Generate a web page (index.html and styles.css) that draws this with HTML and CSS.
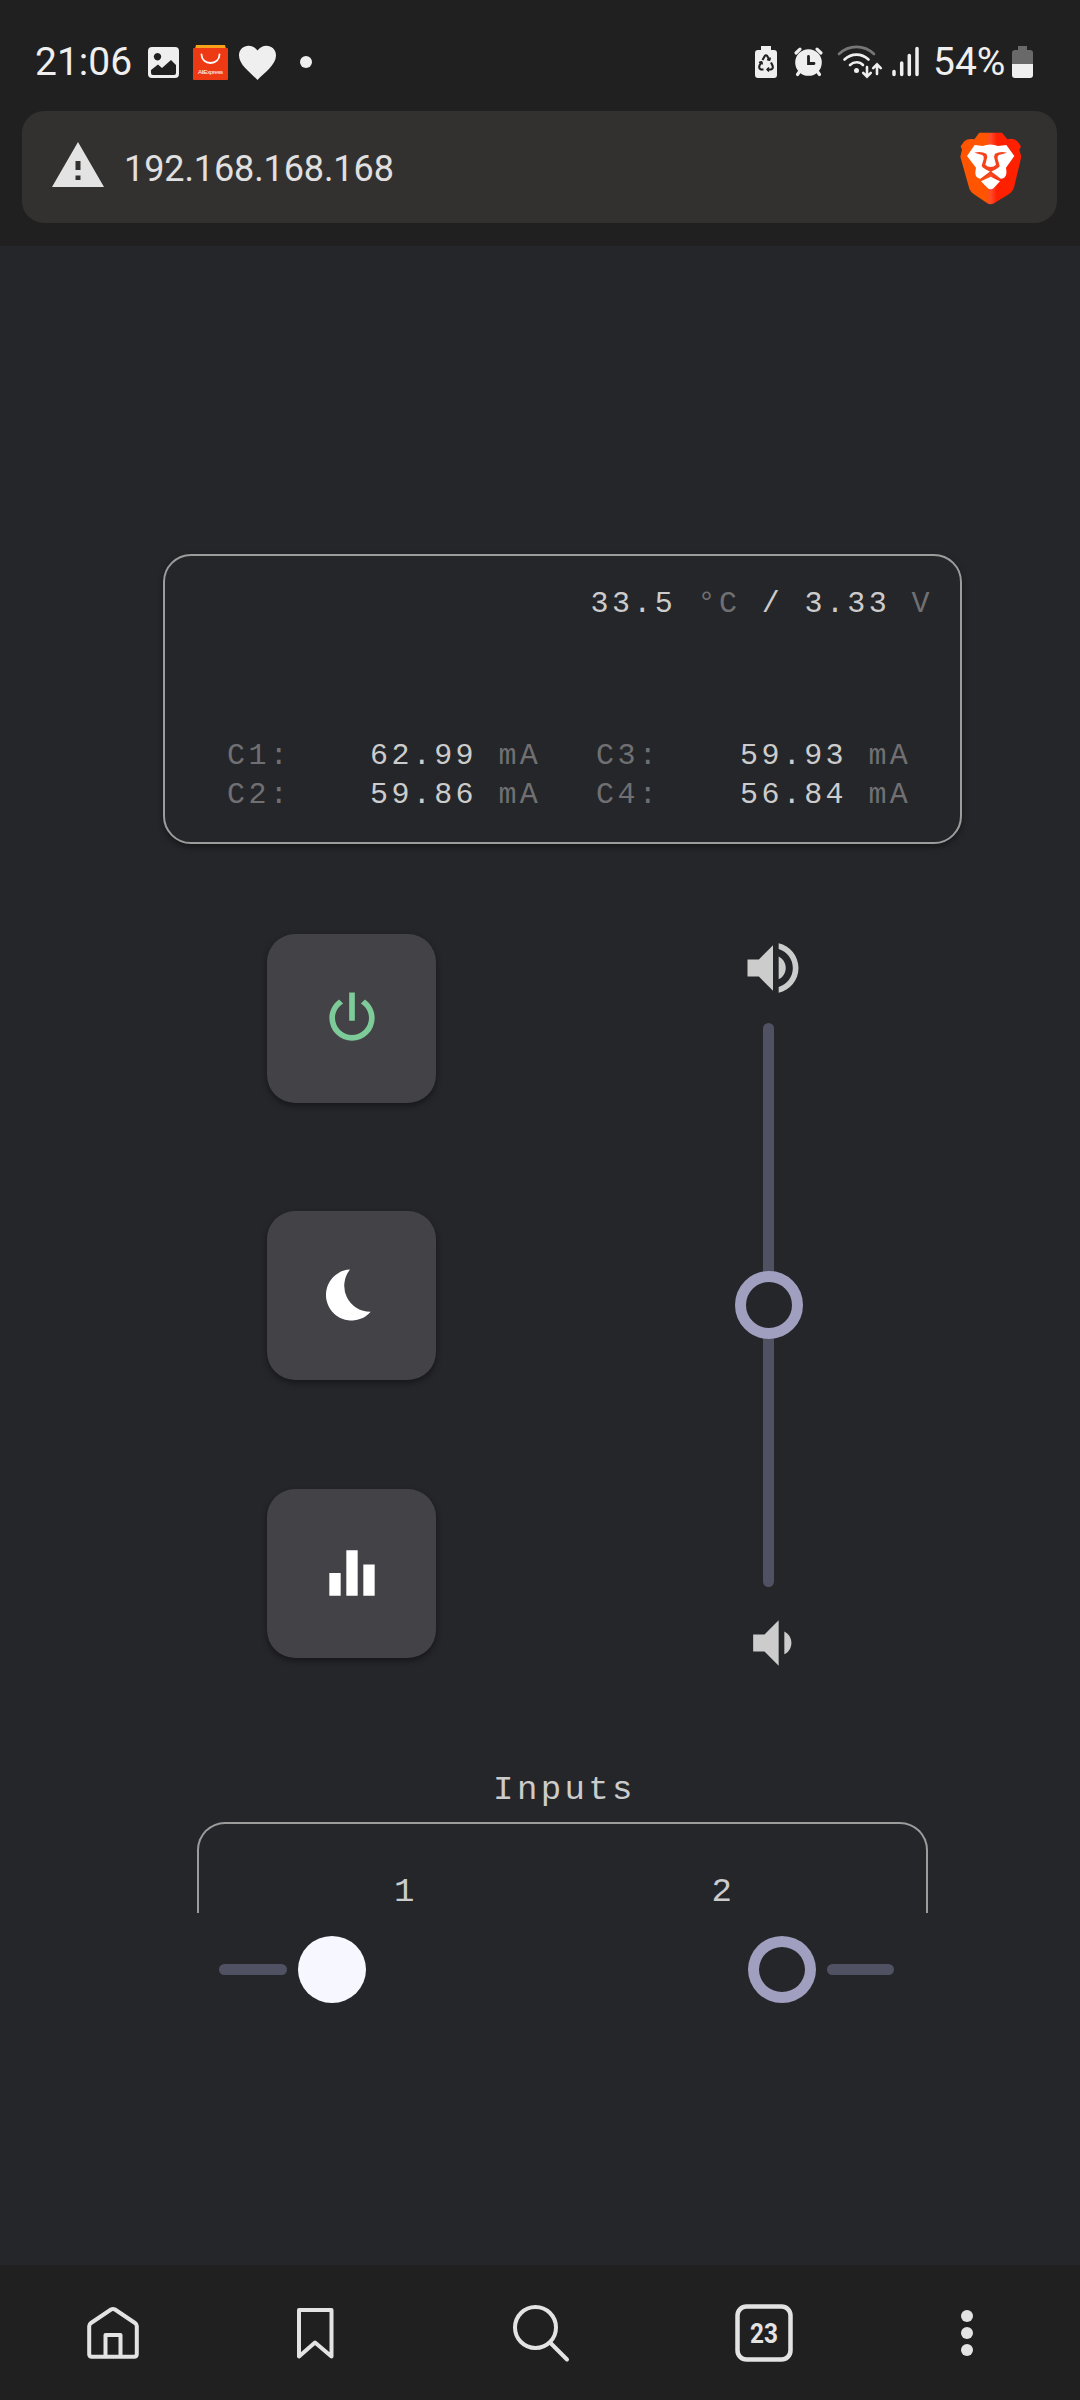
FILE: index.html
```html
<!DOCTYPE html>
<html lang="en">
<head>
<meta charset="utf-8">
<title>192.168.168.168</title>
<link rel="stylesheet" href="styles.css">
</head>
<body>
<header class="chrome">
  <div class="status">
    <span class="clock">21:06</span>
    <svg width="38" height="44" viewBox="148 40 38 44"><path fill="#efefef" fill-rule="evenodd" d="M152 47h23q4 0 4 4v23q0 4-4 4h-23q-4 0-4-4V51q0-4 4-4zM157.500 53a3.700 3.700 0 1 0 .01 0zM151 70v3q0 2 2 2h21q2 0 2-2v-8l-5-5-9 8-4-3.500z"/></svg>
    <svg width="48" height="44" viewBox="186 40 48 44"><path fill="#f6a21a" d="M196 45h29l1 4h-31z"/><path fill="#ee3a14" d="M194 48h33q1 0 1 1v30q0 1-1 1h-33q-1 0-1-1V49q0-1 1-1z"/><path fill="none" stroke="#fff" stroke-width="1.800" stroke-linecap="round" d="M201.500 54.500c0 5 4 8.500 9 8.500s9-3.500 9-8.500"/><text x="198" y="74" font-family="Liberation Sans" font-size="6" fill="#fff" textLength="25">AliExpress</text></svg>
    <svg width="54" height="44" viewBox="234 40 54 44"><path fill="#efefef" d="M257.500 80C251 73 239 65 239 55.500c0-10.500 13-13 18.500-5C263 42.500 276 45 276 55.500 276 65 264 73 257.500 80z"/></svg>
    <svg width="36" height="44" viewBox="288 40 36 44"><circle cx="306" cy="62" r="6" fill="#efefef"/></svg>
    <svg class="push" width="38" height="44" viewBox="748 40 38 44"><path fill="#efefef" d="M761 46h10v4h3q3 0 3 3v22q0 3-3 3h-16q-3 0-3-3V53q0-3 3-3h3z"/><g fill="none" stroke="#202020" stroke-width="2.100" stroke-linejoin="round"><path d="M762.500 60l2.300-4q1.200-1.500 2.400 0l2.300 4M771 62.500l1.500 3q1 3.500-1.500 4h-4M763.500 69.500h-2.500q-2.500-1-1.500-4l2-3.500"/><path d="M769 67.500l-2 2 2 2M759 62.500l2.700-.7.700 2.700M767 59.500l2.600.700.700-2.700" stroke-width="1.500"/></g></svg>
    <svg width="44" height="44" viewBox="786 40 44 44"><circle cx="808.500" cy="62.500" r="13.300" fill="#efefef"/><g stroke="#efefef" stroke-width="3.200" stroke-linecap="round"><path d="M796 53l4-3.800M821 53l-4-3.800M800 71l-2.500 3.500M817 71l2.500 3.500"/></g><path fill="none" stroke="#202020" stroke-width="2.800" stroke-linecap="round" d="M808.500 56.500v7h5.500"/></svg>
    <svg width="57" height="44" viewBox="830 40 57 44"><g fill="none" stroke="#efefef" stroke-width="2.600" stroke-linecap="round"><path stroke="#777" d="M839 54c10-9.500 25-9.500 35 0"/><path d="M844.500 59.500c7-6.500 17-6.500 24 0M850 65c4-3.700 9.500-3.700 13 0M867 67v9.500m-3.800-3.700 3.800 3.800 3.800-3.800M877 74v-9.500m-3.800 3.700 3.800-3.800 3.800 3.800"/></g><circle cx="856.500" cy="70.500" r="2.500" fill="#efefef"/></svg>
    <svg width="40" height="44" viewBox="887 40 40 44"><g stroke="#efefef" stroke-width="3.500" stroke-linecap="round"><path d="M894 71.500v3M901.700 63v11.500M909.300 55.500v19M917 48.500v26"/></g></svg>
    <span class="charge">54%</span>
    <svg width="33" height="44" viewBox="1007 40 33 44"><path fill="#696969" d="M1018 46h9v4h3q3 0 3 3v12h-21V53q0-3 3-3h3z"/><path fill="#efefef" d="M1012 64h21v11q0 3-3 3h-15q-3 0-3-3z"/></svg>
  </div>
  <div class="address">
    <svg width="52" height="45" viewBox="0 0 52 45"><path fill="#e3e3e3" fill-rule="evenodd" d="M26 0L52 45H0zM23.500 19v9h5v-9zM23.500 33.500v4.500h5v-4.500z"/></svg>
    <span class="url">192.168.168.168</span>
    <svg class="shield" width="62" height="73" viewBox="692 335 186 219">
      <defs><linearGradient id="mane"><stop offset=".42" stop-color="#ff5500"/><stop offset=".5" stop-color="#ff4a2a"/><stop offset=".6" stop-color="#ff2000"/></linearGradient></defs>
      <path fill="url(#mane)" d="M750 337h68l16 20q20-5 30 6l11 15-5 10 6 21-21 89q-4 16-17 24l-44 27q-10 6-20 0l-40-27q-13-9-16-24l-25-89 5-21-4-10 11-15q10-9 30-6z"/>
      <path fill="#fff" d="M736 374l24 3q23-9 46 0l25-3 24 33-25 35q2 10 1 18-3 17-21 15l-25-20-26 20q-19 1-21-15 0-8 2-18l-27-35z"/>
      <path fill="#f4431c" d="M735 397q20-5 36 3l3 9-6 24q6 7 16 7t16-7l-6-24 3-9q16-8 36-3l-24 7q-6 3-4 12l6 20q0 6-27 18-27-12-27-18l6-20q2-9-4-12z"/>
      <path fill="none" stroke="#f4431c" stroke-width="6" d="M784 450v6l-28 21M784 456l28 21"/>
      <path fill="#fff" d="M755 483l29-14 28 14-18 19q-10 9-20 0z"/>
    </svg>
  </div>
</header>

<main class="panel">
  <section class="display">
    <p class="line ambient">33.5 <i>°C</i> / 3.33 <i>V</i></p>
    <div class="currents">
      <span class="line"><i>C1:</i></span><span class="line">62.99 <i>mA</i></span>
      <span class="line"><i>C3:</i></span><span class="line">59.93 <i>mA</i></span>
      <span class="line"><i>C2:</i></span><span class="line">59.86 <i>mA</i></span>
      <span class="line"><i>C4:</i></span><span class="line">56.84 <i>mA</i></span>
    </div>
  </section>

  <section class="controls">
    <div class="buttons">
      <button class="tile power"><svg width="68" height="68" viewBox="0 0 24 24"><path fill="currentColor" d="M16.560 5.440L15.110 6.890C16.840 7.940 18 9.830 18 12A6 6 0 0 1 12 18A6 6 0 0 1 6 12C6 9.830 7.160 7.940 8.880 6.880L7.440 5.440C5.360 6.880 4 9.280 4 12A8 8 0 0 0 12 20A8 8 0 0 0 20 12C20 9.280 18.640 6.880 16.560 5.440M13 3H11V13H13"/></svg></button>
      <button class="tile"><svg width="68" height="68" viewBox="0 0 24 24"><path fill="currentColor" d="M11.300 3A9 9 0 1 0 18.600 17.900A9.150 9.150 0 0 1 11.300 3z"/></svg></button>
      <button class="tile"><svg width="68" height="68" viewBox="0 0 24 24"><path fill="currentColor" d="M10 20h4V4h-4v16zm-6 0h4v-8H4v8zM16 9v11h4V9h-4z"/></svg></button>
    </div>
    <div class="volume">
      <svg width="68" height="68" viewBox="0 0 24 24"><path fill="#ccc" d="M3 9V15H7L12 20V4L7 9H3M16.500 12C16.500 10.230 15.500 8.710 14 7.970V16C15.500 15.290 16.500 13.760 16.500 12M14 3.230V5.290C16.890 6.150 19 8.830 19 12C19 15.170 16.890 17.840 14 18.700V20.770C18 19.860 21 16.280 21 12C21 7.720 18 4.140 14 3.230Z"/></svg>
      <div class="track"><span class="knob"></span></div>
      <svg width="68" height="68" viewBox="0 0 24 24"><path fill="#ccc" d="M5 9V15H9L14 20V4L9 9M18.500 12C18.500 10.230 17.500 8.710 16 7.970V16C17.500 15.290 18.500 13.760 18.500 12"/></svg>
    </div>
  </section>

  <section class="inputs">
    <h2 class="title">Inputs</h2>
    <div class="bracket"><span>1</span><span>2</span></div>
    <div class="switches">
      <div class="switch"><span class="bar"></span><span class="dot"></span></div>
      <div class="switch"><span class="knob"></span><span class="bar"></span></div>
    </div>
  </section>
</main>

<nav class="nav">
  <svg width="56" height="60" viewBox="85 2303 56 60"><g fill="none" stroke="#e3e3e3" stroke-width="4" stroke-linejoin="round"><path d="M111 2309.500q2-1.200 4 0l20 13.500q1.800 1.200 1.800 3v28q0 2.700-2.700 2.700h-42.200q-2.700 0-2.700-2.700v-28q0-1.800 1.800-3z"/><path d="M105.500 2356v-21h15v21"/></g></svg>
  <svg width="40" height="60" viewBox="295 2303 40 60"><path fill="none" stroke="#e3e3e3" stroke-width="4" stroke-linejoin="round" d="M299 2310h32.500v46.500L315 2342.500l-16 14z"/></svg>
  <svg width="60" height="60" viewBox="510 2303 60 60"><g fill="none" stroke="#e3e3e3" stroke-width="4" stroke-linecap="round"><circle cx="534.500" cy="2327.500" r="20.500"/><path d="M549.500 2343l16.500 16.500"/></g></svg>
  <svg width="60" height="60" viewBox="734 2303 60 60"><rect x="737.500" y="2306.500" width="53" height="53" rx="9" fill="none" stroke="#e3e3e3" stroke-width="4.500"/><text x="750" y="2343" font-family="Roboto" font-weight="700" font-size="28" fill="#e3e3e3" textLength="28" lengthAdjust="spacingAndGlyphs">23</text></svg>
  <svg width="20" height="60" viewBox="957 2303 20 60"><g fill="#e3e3e3"><circle cx="967" cy="2316" r="6"/><circle cx="967" cy="2333" r="6"/><circle cx="967" cy="2350" r="6"/></g></svg>
</nav>
</body>
</html>
```
FILE: styles.css
```css
* { box-sizing: border-box; }

body {
  margin: 0;
  width: 1080px;
  height: 2400px;
  display: flex;
  flex-direction: column;
  background: #25262a;
  color: #ccc;
  font-family: "Liberation Mono", monospace;
}

svg { display: block; flex: none; }

.chrome {
  height: 246px;
  background: #202020;
  font-family: Roboto, sans-serif;
}

.status {
  height: 111px;
  padding: 40px 40px 0 35px;
  display: flex;
  color: #efefef;
  font-size: 39px;
  line-height: 44px;
}

.clock { width: 113px; }
.push { margin-left: auto; }
.charge { width: 80px; padding-left: 6px; }

.address {
  height: 112px;
  margin: 0 23px 0 22px;
  padding: 0 35px 0 30px;
  display: flex;
  align-items: center;
  border-radius: 22px;
  background: #33312f;
}

.address svg:first-child { margin-bottom: 6px; }

.url {
  margin-left: 20px;
  padding-top: 3px;
  color: #e0e0e0;
  font-size: 36px;
  letter-spacing: -.1px;
}

.shield { margin: 2px 0 0 auto; }

.panel { flex: 1; padding: 308px 118px 0 163px; }

.display {
  width: 799px;
  height: 290px;
  padding: 29px 27px 0 62px;
  border: 2px solid #9c9c9c;
  border-radius: 28px;
  box-shadow: 0 3px 6px rgba(0, 0, 0, .4);
}

.line {
  margin: 0;
  font-size: 30px;
  line-height: 39px;
  letter-spacing: 3.4px;
  white-space: pre;
}

.line i { font-style: normal; color: #707073; }

.ambient { text-align: right; }

.currents {
  margin-top: 113px;
  display: grid;
  grid-template-columns: 143px 226px 144px 180px;
}

.controls {
  height: 743px;
  margin-top: 90px;
  padding: 0 155px 0 104px;
  display: flex;
  justify-content: space-between;
}

.buttons {
  display: flex;
  flex-direction: column;
  gap: 108px;
}

.tile {
  width: 169px;
  height: 169px;
  padding: 0 0 2px;
  display: grid;
  place-items: center;
  border: 0;
  border-radius: 28px;
  background: #434246;
  color: #fff;
  box-shadow: 0 3px 6px rgba(0, 0, 0, .4);
}

.tile:last-child { margin-top: 1px; }

.power { color: #7dcb98; }

.volume {
  display: flex;
  flex-direction: column;
  align-items: flex-start;
}

.track {
  flex: none;
  width: 11px;
  height: 564px;
  margin: 21px 0 22px 24px;
  display: flex;
  align-items: center;
  justify-content: center;
  border-radius: 6px;
  background: #515164;
}

.knob {
  flex: none;
  width: 68px;
  height: 68px;
  border: 11px solid #a09fbf;
  border-radius: 50%;
  background: #25262a;
}

.inputs { margin: 93px 34px 0; }

.title {
  margin: 0;
  padding-left: 4px;
  text-align: center;
  font-size: 34px;
  font-weight: 400;
  line-height: 40px;
  letter-spacing: 3.4px;
}

.bracket {
  height: 91px;
  margin-top: 12px;
  padding: 48px 194px 0 195px;
  display: flex;
  justify-content: space-between;
  border: 2px solid #9c9c9c;
  border-bottom: 0;
  border-radius: 28px 28px 0 0;
  font-size: 34px;
  line-height: 40px;
}

.switches {
  margin-top: 23px;
  padding: 0 34px 0 22px;
  display: flex;
  justify-content: space-between;
}

.switch { display: flex; align-items: center; gap: 11px; }
.switch .knob { height: 67px; }

.bar {
  width: 68px;
  height: 11px;
  border-radius: 6px;
  background: #515164;
}

.switch:last-child .bar { width: 67px; }

.dot {
  width: 68px;
  height: 67px;
  border-radius: 50%;
  background: #f7f7ff;
}

.nav {
  height: 135px;
  padding-left: 85px;
  display: grid;
  grid-template-columns: 210px 216px 223px 223px 20px;
  align-items: center;
  background: #202020;
}
```
